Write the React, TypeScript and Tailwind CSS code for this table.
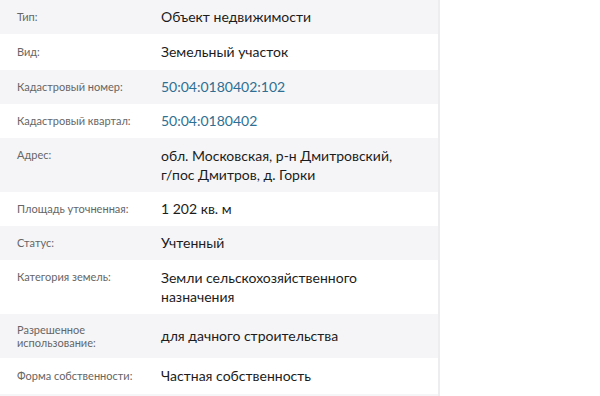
const rows: {
  label: string;
  value: string;
  link?: boolean;
  tall?: boolean;
  roomy?: boolean;
}[] = [
  { label: "Тип:", value: "Объект недвижимости" },
  { label: "Вид:", value: "Земельный участок", roomy: true },
  { label: "Кадастровый номер:", value: "50:04:0180402:102", link: true },
  { label: "Кадастровый квартал:", value: "50:04:0180402", link: true },
  { label: "Адрес:", value: "обл. Московская, р-н Дмитровский, г/пос Дмитров, д. Горки" },
  { label: "Площадь уточненная:", value: "1 202 кв. м" },
  { label: "Статус:", value: "Учтенный" },
  { label: "Категория земель:", value: "Земли сельскохозяйственного назначения" },
  { label: "Разрешенное использование:", value: "для дачного строительства", tall: true },
  { label: "Форма собственности:", value: "Частная собственность", roomy: true },
  { label: "", value: "" },
];

export default function App() {
  return (
    <div
      className="flex h-[396px] w-[600px] overflow-hidden bg-white"
      style={{ fontFamily: 'Lato, "Open Sans", sans-serif' }}
    >
      <div className="w-[440px] shrink-0 border-r-2 border-[#ededf0]">
        {rows.map((row, i) => (
          <div
            key={i}
            className={
              (i % 2 === 0 ? "bg-[#f5f5f7] " : "bg-white ") +
              (row.tall ? "items-center py-[9px] " : "items-start ") +
              (row.roomy ? "py-[9px] " : "py-[8px] ") +
              "flex"
            }
          >
            <div
              className={
                "w-[161px] shrink-0 pl-[17px] pr-2 text-[11px] text-[#666] " +
                (row.tall ? "leading-[13px]" : "leading-[18px]")
              }
            >
              {row.label}
            </div>
            <div
              className={
                "w-[240px] text-[14px] " +
                (row.value.length > 30 ? "leading-[19px] " : "leading-[18px] ") +
                (row.link ? "text-[#2f6f93]" : "text-[#1c1c1c]")
              }
            >
              {row.value || "\u00a0"}
            </div>
          </div>
        ))}
      </div>
      <div className="flex-1" />
    </div>
  );
}
